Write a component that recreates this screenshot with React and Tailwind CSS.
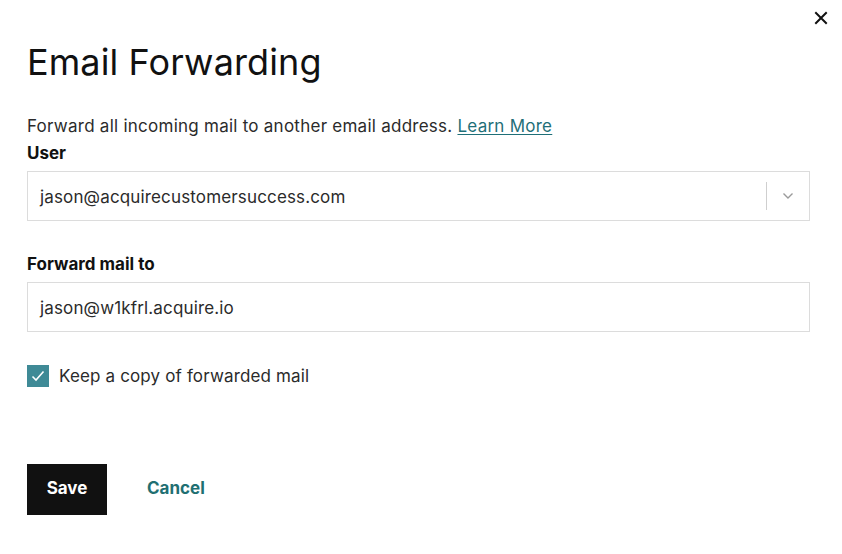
import React from "react";

export default function App() {
  return (
    <div className="relative w-[842px] h-[554px] bg-white text-[#111111] overflow-hidden" style={{ fontFamily: "Inter, 'Liberation Sans', sans-serif" }}>
      <button className="absolute right-[14px] top-[11px] w-[14px] h-[14px] flex items-center justify-center">
        <svg width="14" height="14" viewBox="0 0 14 14" fill="none" stroke="#111" strokeWidth="2" strokeLinecap="square">
          <path d="M2 2L12 12M12 2L2 12" />
        </svg>
      </button>
      <div className="flex flex-col pl-[27px] pr-[32px] pt-[38px]">
        <h1 className="text-[36px] leading-[48px] font-normal tracking-[0.1px] text-[#111]">Email Forwarding</h1>
        <p className="mt-[29px] text-[17px] leading-[22px] tracking-[0.25px] text-[#2b2b2b]">
          Forward all incoming mail to another email address.{" "}
          <a className="text-[#1f6f78] underline underline-offset-2">Learn More</a>
        </p>
        <label className="mt-[5px] text-[17px] leading-[22px] font-bold text-[#111]">User</label>
        <div className="mt-[7px] h-[50px] border border-[#dcdcdc] flex items-center">
          <span className="flex-1 pl-[12px] pt-[3px] text-[17px] tracking-[0.15px] text-[#2b2b2b]">jason@acquirecustomersuccess.com</span>
          <span className="w-px h-[28px] bg-[#cfcfcf]"></span>
          <span className="w-[42px] flex items-center justify-center">
            <svg width="12" height="8" viewBox="0 0 12 8" fill="none" stroke="#9a9a9a" strokeWidth="1.4">
              <path d="M1.5 1.5L6 6L10.5 1.5" />
            </svg>
          </span>
        </div>
        <label className="mt-[32px] text-[17px] leading-[22px] font-bold text-[#111]">Forward mail to</label>
        <div className="mt-[7px] h-[50px] border border-[#dcdcdc] flex items-center">
          <span className="pl-[12px] pt-[3px] text-[17px] tracking-[0.15px] text-[#2b2b2b]">jason@w1kfrl.acquire.io</span>
        </div>
        <div className="mt-[31px] flex items-center gap-[10px]">
          <span className="w-[22px] h-[22px] bg-[#3f8a96] flex items-center justify-center">
            <svg width="14" height="12" viewBox="0 0 14 12" fill="none" stroke="#ffffff" strokeWidth="1.6">
              <path d="M1.5 6.5L5 10L12.5 1.5" />
            </svg>
          </span>
          <span className="pt-[1px] text-[17px] tracking-[0.15px] text-[#2b2b2b]">Keep a copy of forwarded mail</span>
        </div>
        <div className="mt-[74px] flex items-center">
          <button className="w-[80px] h-[51px] bg-[#111111] text-white text-[17px] font-bold">Save</button>
          <button className="ml-[40px] text-[17px] font-bold text-[#1f6f72]">Cancel</button>
        </div>
      </div>
    </div>
  );
}
